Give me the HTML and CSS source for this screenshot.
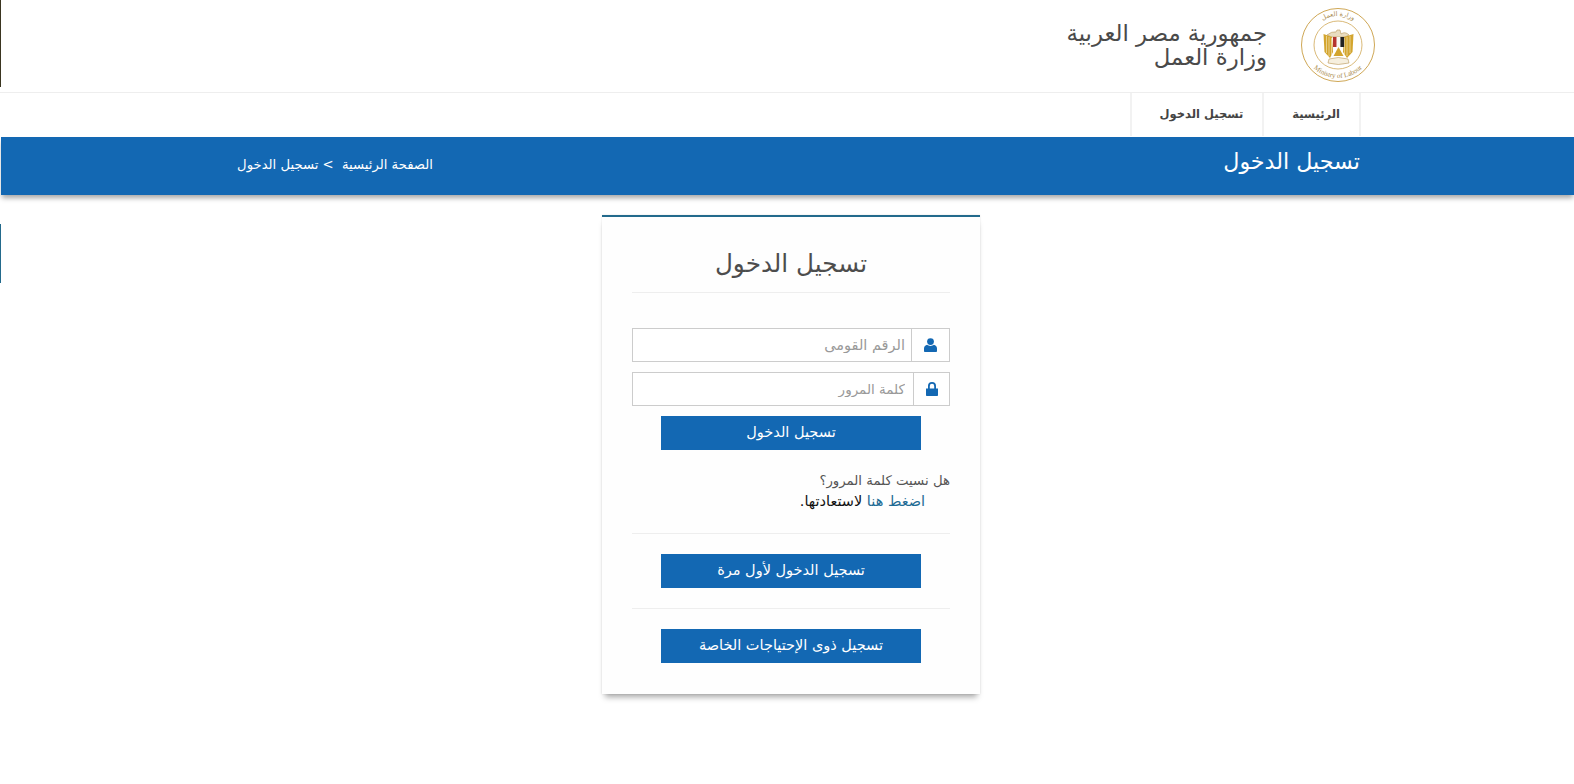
FILE: index.html
```html
<!DOCTYPE html>
<html lang="ar" dir="rtl">
<head>
    <meta charset="UTF-8">
    <meta name="viewport" content="width=device-width, initial-scale=1.0">
    <title>تسجيل الدخول</title>
    <link rel="stylesheet" href="styles.css">
</head>
<body>
    <header class="top-header">
        <svg class="logo" width="78" height="78" viewBox="0 0 78 78" role="img" aria-label="وزارة العمل">
            <defs>
                <path id="arcTop" d="M10 39 A29 29 0 0 1 68 39"/>
                <path id="arcBottom" d="M5 39 A34 33 0 0 0 73 39"/>
            </defs>
            <circle cx="39" cy="39" r="36.500" fill="#fff" stroke="#cfa755" stroke-width="1"/>
            <circle cx="39" cy="39" r="24" fill="#fff" stroke="#cfa755" stroke-width="0.8"/>
            <text class="logo-ar"><textPath href="#arcTop" startOffset="50%" text-anchor="middle">وزارة العمل</textPath></text>
            <text class="logo-en" dir="ltr"><textPath href="#arcBottom" startOffset="50%" text-anchor="middle">Ministry of Labour</textPath></text>
            <path d="M28 29Q33 25 37 26L38 24H41L42 28Q46 25 50 29L46 31H33z" fill="#e9dcc0" stroke="#b8975a" stroke-width="0.6"/>
            <path d="M33 31L24.500 28L25.500 46L31 52L34 46z" fill="#d3a52e"/>
            <path d="M45 31L54.500 28L53.500 46L48 52L44 46z" fill="#d3a52e"/>
            <path d="M27.500 30v17M30 31v19M32.500 32v17M45.500 32v17M48 31v19M51 30v17" stroke="#f3e3b3" stroke-width="0.7"/>
            <rect x="34" y="31" width="3.700" height="10" fill="#b5342f"/>
            <rect x="37.700" y="31" width="3.700" height="10" fill="#f7f7f2"/>
            <rect x="41.400" y="31" width="3.700" height="10" fill="#222"/>
            <path d="M39.500 41L44.500 50H34.500z" fill="#d3a52e"/>
            <path d="M30 53Q39 50 49 53L50 57Q39 60 29 57z" fill="#f6efde" stroke="#b8975a" stroke-width="0.6"/>
        </svg>
        <div class="site-title">
            <div>جمهورية مصر العربية</div>
            <div>وزارة العمل</div>
        </div>
    </header>

    <nav class="main-nav">
        <ul>
            <li><a href="#">الرئيسية</a></li>
            <li><a href="#">تسجيل الدخول</a></li>
        </ul>
    </nav>

    <section class="page-bar">
        <h1>تسجيل الدخول</h1>
        <div class="crumbs"><a href="#">الصفحة الرئيسية</a>&nbsp; &gt; تسجيل الدخول</div>
    </section>

    <main class="content">
        <span class="side-mark"></span>
        <form class="login-card">
            <h2>تسجيل الدخول</h2>

            <div class="field">
                <span class="field-icon user-icon">
                    <svg width="13" height="14" viewBox="0 0 13 14"><circle cx="6.500" cy="3.600" r="3.400"/><path d="M0 13V10.500C0 8.500 1.500 7 3.200 6.800C4 7.500 5.200 7.900 6.500 7.900S9 7.500 9.800 6.800C11.500 7 13 8.500 13 10.500V13C13 13.600 12.500 14 12 14H1C.5 14 0 13.600 0 13Z"/></svg>
                </span>
                <input type="text" placeholder="الرقم القومى">
            </div>
            <div class="field">
                <span class="field-icon lock-icon">
                    <svg width="12" height="14" viewBox="0 0 12 14"><path d="M2 6.500V4A4 4 0 0 1 10 4V6.500H12V13C12 13.600 11.600 14 11 14H1C.4 14 0 13.600 0 13V6.500ZM3.800 6.500H8.200V4A2.200 2.200 0 0 0 3.800 4Z"/></svg>
                </span>
                <input class="password-input" type="password" placeholder="كلمة المرور">
            </div>
            <button type="button" class="btn">تسجيل الدخول</button>

            <p class="forgot">هل نسيت كلمة المرور؟</p>
            <p class="forgot-link"><a href="#">اضغط هنا</a> لاستعادتها.</p>

            <hr>
            <button type="button" class="btn">تسجيل الدخول لأول مرة</button>
            <hr>
            <button type="button" class="btn">تسجيل ذوى الإحتياجات الخاصة</button>
        </form>
    </main>
</body>
</html>
```

FILE: styles.css
```css
* {
    box-sizing: border-box;
    font-family: "DejaVu Sans", "Noto Sans", sans-serif;
}

body {
    margin: 0;
    background-color: #fff;
    color: #444;
}

/* header */
.top-header {
    height: 93px;
    display: flex;
    align-items: flex-start;
    padding: 6px 197px 0 0;
    border-bottom: 1px solid #eee;
    position: relative;
}

.top-header::after {
    content: "";
    position: absolute;
    left: 0;
    top: 0;
    width: 1px;
    height: 87px;
    background-color: #3a3520;
}

.logo {
    flex: none;
    margin-left: 32px;
}

.logo-ar textPath {
    font-size: 6.500px;
    fill: #a98a4c;
}

.logo-en textPath {
    font-family: "Liberation Serif", serif;
    font-size: 7px;
    fill: #a98a4c;
}

.site-title {
    margin-top: 15px;
    font-size: 22.800px;
    line-height: 24px;
    color: #4a4a4a;
}

/* nav */
.main-nav {
    height: 44px;
    padding-right: 213px;
}

.main-nav ul {
    list-style-type: none;
    margin: 0;
    padding: 0;
    display: flex;
}

.main-nav li {
    border-left: 2px solid #f2f2f2;
}

.main-nav li:first-child {
    border-right: 2px solid #f2f2f2;
}

.main-nav a {
    display: block;
    height: 43px;
    line-height: 42px;
    padding: 0 19px 0 28px;
    font-size: 11.500px;
    font-weight: bold;
    color: #444;
    text-decoration: none;
}

/* blue bar */
.page-bar {
    height: 58px;
    margin-left: 1px;
    background-color: #1368b3;
    color: #fff;
    display: flex;
    justify-content: space-between;
    align-items: center;
    padding-right: 214px;
    box-shadow: 0 4px 5px -1px rgba(0, 0, 0, 0.35);
}

.page-bar h1 {
    margin: 0 0 10px;
    font-size: 22.200px;
    font-weight: normal;
}

.crumbs {
    width: 215px;
    margin: 0 0 4px 217px;
    font-size: 13.200px;
}

.crumbs a {
    color: #fff;
    text-decoration: none;
}

/* login */
.content {
    display: flex;
    justify-content: center;
    padding: 20px 0 40px 8px;
    position: relative;
}

.side-mark {
    position: absolute;
    left: 0;
    top: 29px;
    width: 1px;
    height: 59px;
    background-color: #236a8c;
}

.login-card {
    width: 378px;
    height: 479px;
    padding: 0 30px;
    background-color: #fefefe;
    border-top: 2px solid #236a8c;
    box-shadow: 0 0 2px rgba(0, 0, 0, 0.1), 0 6px 6px -3px rgba(0, 0, 0, 0.35);
    text-align: right;
}

.login-card h2 {
    margin: 0 0 35px;
    height: 76px;
    padding-top: 32px;
    font-size: 24.700px;
    font-weight: normal;
    text-align: center;
    color: #4d4d4d;
    border-bottom: 1px solid #eee;
}

.field {
    display: flex;
    height: 34px;
    margin-bottom: 10px;
    border: 1px solid #ccc;
    background-color: #fff;
}

.field-icon {
    flex: none;
    width: 38px;
    display: flex;
    align-items: center;
    justify-content: center;
    border-left: 1px solid #ccc;
}

.lock-icon {
    width: 36px;
}

.field-icon svg {
    fill: #1368b3;
}

.field input {
    flex: 1;
    min-width: 0;
    border: none;
    outline: none;
    padding: 0 6px;
    font-size: 14.500px;
    background: transparent;
}

.field .password-input {
    padding-right: 8px;
    font-size: 13.500px;
}

.field input::placeholder {
    color: #999;
}

.btn {
    display: block;
    width: 260px;
    height: 34px;
    margin: 0 auto;
    padding: 0 0 2px;
    border: none;
    background-color: #1368b3;
    color: #fff;
    font-size: 14.500px;
    cursor: pointer;
}

.forgot,
.forgot-link {
    margin: 0;
    line-height: 21px;
}

.forgot {
    margin-top: 20px;
    font-size: 13.300px;
    color: #555;
}

.forgot-link {
    padding: 0 25px 1px 0;
    font-size: 14.500px;
    color: #111;
}

.forgot-link a {
    color: #1c6a94;
    text-decoration: none;
}

.login-card hr {
    margin: 20px 0;
    border: none;
    border-top: 1px solid #eee;
}
```
